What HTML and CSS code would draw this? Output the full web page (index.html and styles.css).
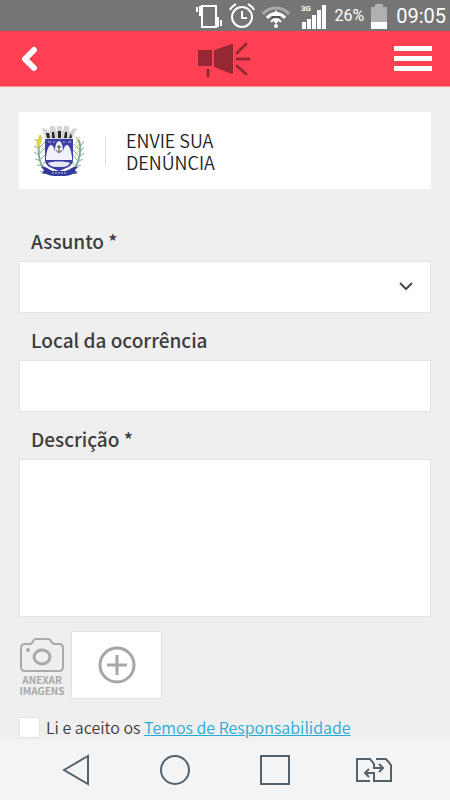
FILE: index.html
```html
<!DOCTYPE html>
<html lang="pt-BR">
<head>
    <meta charset="UTF-8">
    <meta name="viewport" content="width=device-width, initial-scale=1.0">
    <title>Envie sua denúncia</title>
    <link rel="stylesheet" href="styles.css">
</head>
<body>

    <div class="status-bar">
        <svg width="26" height="26" viewBox="0 0 26 26" fill="none" stroke="#fff" stroke-width="2">
            <rect x="6" y="3" width="14" height="21" stroke-width="2"/>
            <path d="M4 3v10M1 4v5M22 14v10M25 17v6"/>
        </svg>
        <svg width="26" height="26" viewBox="0 0 26 26" fill="none" stroke="#fff" stroke-width="2">
            <circle cx="13" cy="14" r="10"/>
            <path d="M13 8v7h5M1 7C2 4 4 3 7 1M25 7c-1-3-3-4-6-6"/>
        </svg>
        <svg width="28" height="26" viewBox="0 0 28 26" fill="none">
            <path d="M1 11C8 3 20 3 27 11" stroke="#aaa" stroke-width="3"/>
            <path d="M5 15C10 9 18 9 23 15" stroke="#fff" stroke-width="3"/>
            <path d="M9 19c3-4 7-4 10 0" stroke="#fff" stroke-width="2"/>
            <path d="M14 7l-4 6h8zM14 21l-4-5h8z" fill="#fff"/>
            <path d="M10 14h8" stroke="#333" stroke-width="1"/>
            <circle cx="14" cy="23" r="2" fill="#fff"/>
        </svg>
        <svg class="signal" width="26" height="26" viewBox="0 0 26 26" fill="#fff">
            <text class="signal-text" x="0" y="8">3G</text>
            <path d="M1 19h4v7H1zM6 16h4v10H6zM11 12h4v14h-4zM16 7h4v19h-4zM21 2h4v24h-4z"/>
        </svg>
        <span class="battery-level">26%</span>
        <svg width="16" height="26" viewBox="0 0 16 26">
            <path d="M0 4h4V1h8v3h4v16H0z" fill="#b0b0b0"/>
            <path d="M0 19h16v7H0z" fill="#fff"/>
        </svg>
        <time class="clock">09:05</time>
    </div>

    <header class="header">
        <button type="button" class="header-button back" aria-label="Voltar">
            <svg width="18" height="26" viewBox="0 0 18 26" fill="none" stroke="#fff" stroke-width="6" stroke-linecap="round" stroke-linejoin="round">
                <path d="M13 4L4 13l9 9"/>
            </svg>
        </button>
        <svg class="megaphone" width="54" height="38" viewBox="0 0 54 38" fill="#962833" stroke="#962833">
            <rect x="1" y="11" width="12" height="14" stroke-width="2"/>
            <path d="M17 11L34 5v28l-17-7z" stroke-width="2" stroke-linejoin="round"/>
            <path d="M10 30v6M39 13l9-9M39 19h12M39 26l9 8" stroke-width="3" stroke-linecap="round"/>
        </svg>
        <button type="button" class="header-button" aria-label="Menu">
            <svg width="38" height="26" viewBox="0 0 38 26" fill="#fff">
                <path d="M0 0h38v5H0zM0 10h38v5H0zM0 20h38v5H0z"/>
            </svg>
        </button>
    </header>

    <main class="content">
        <div class="title-card">
            <svg width="52" height="52" viewBox="0 0 52 52">
                <!-- ramos -->
                <g fill="none" stroke="#7faf9c" stroke-width="1">
                    <path d="M15 47C6 41 4 29 7 13M37 47c9-6 12-20 9-32" stroke-width="2"/>
                    <path d="M6 18l-4-4M6 24l-5-3M6 30l-5-3M8 36l-6-2M11 41l-7-1M14 46l-7 1M7 22l5-5M7 28l5-5M8 34l5-5M10 39l4-4"/>
                    <path d="M47 18l-4-6M47 22l4-6M47 27l4-5M46 32l5-4M44 37l6-3M41 42l7-2M38 46l7 1M46 24l-5-5M45 30l-5-5M44 35l-4-5M41 40l-3-5"/>
                </g>
                <path d="M7 9c3 3 2 6 1 9l-3 6c-3-4-1-10 2-15z" fill="#dbd447"/>
                <path d="M43 18l4-6M42 24l4-5M42 30l4-5" stroke="#d2cc62" stroke-width="1"/>
                <!-- escudo -->
                <path d="M12 14h28v21c0 6-6 8-14 11-8-3-14-5-14-11z" fill="#3b3fa6"/>
                <path d="M13 32c1-8 3-12 5-12 2 0 3 3 4 6 0-6 2-10 4-10s4 4 4 10c1-3 2-6 4-6s4 4 5 12v3H13z" fill="#f0f1fa"/>
                <path d="M15 38c4-2 18-2 22 0-2 4-6 4-11 4s-9 0-11-4z" fill="#e6e8f8"/>
                <path d="M26 20v7M24 22h4M23 25c1 3 5 3 6 0" fill="none" stroke="#444" stroke-width="1"/>
                <path d="M15 17h3M20 17h2M30 17h2M35 17h3" stroke="#b9bce8" stroke-width="1"/>
                <!-- coroa -->
                <path d="M9 3l5 1 1 3 2-1V1h5l1 5h1V1h5v5h1l1-5h5v5l2 1 1-3 5-1-5 11H13z" fill="#d5d5d7"/>
                <path d="M13 8l1 5h3l-1-5zM19 7v6h3l-1-6zM25 6v7h3V6zM32 7l-1 6h3V7zM38 8l-2 5h3z" fill="#272727"/>
                <!-- faixa -->
                <path d="M8 42c5-1 8 3 12 4h12c5-1 8-5 13-4l-3 3 2 4c-5-1-6 2-12 2H21c-6 0-7-3-12-2l2-4z" fill="#343a9c"/>
                <path d="M19 48h15" stroke="#c8cbf0" stroke-width="1" stroke-dasharray="2 1"/>
            </svg>
            <h1 class="title">ENVIE SUA<br>DENÚNCIA</h1>
        </div>

        <form class="form">
            <label class="label" for="assunto">Assunto *</label>
            <div class="select-wrap">
                <select class="field" id="assunto">
                    <option value=""></option>
                </select>
                <svg class="select-arrow" width="16" height="10" viewBox="0 0 16 10" fill="none" stroke="#4a4a4a" stroke-width="2">
                    <path d="M2 2l6 6 6-6"/>
                </svg>
            </div>

            <label class="label" for="local">Local da ocorrência</label>
            <input class="field" type="text" id="local">

            <label class="label" for="descricao">Descrição *</label>
            <textarea class="field description" id="descricao"></textarea>

            <div class="attach">
                <div class="attach-label">
                    <svg width="46" height="34" viewBox="0 0 46 34" fill="none" stroke="#aaa" stroke-width="2">
                        <path d="M6 6h5c2 0 2-1 3-3s2-2 3-2h12c2 0 2 1 3 2 1 2 2 3 4 3h4c3 0 4 2 4 4v19c0 3-2 4-4 4H6c-3 0-4-2-4-4V10c0-3 2-4 4-4z"/>
                        <ellipse cx="23" cy="19" rx="8" ry="7" stroke-width="3"/>
                        <circle cx="9" cy="12" r="2" fill="#aaa" stroke="none"/>
                    </svg>
                    <span>ANEXAR<br>IMAGENS</span>
                </div>
                <button type="button" class="attach-button" aria-label="Anexar imagens">
                    <svg width="38" height="38" viewBox="0 0 38 38" fill="none" stroke="#a6a6a6" stroke-width="3">
                        <circle cx="19" cy="19" r="17"/>
                        <path d="M19 9v20M9 19h20"/>
                    </svg>
                </button>
            </div>

            <div class="terms">
                <input class="checkbox" type="checkbox" id="aceito">
                <label for="aceito">Li e aceito os <a href="#termos">Temos de Responsabilidade</a></label>
            </div>
        </form>
    </main>

    <nav class="nav-bar">
        <button type="button" class="nav-button" aria-label="Voltar">
            <svg width="40" height="32" viewBox="0 0 40 32"><path d="M8 16l24-14v28z"/></svg>
        </button>
        <button type="button" class="nav-button" aria-label="Início">
            <svg width="40" height="32" viewBox="0 0 40 32"><circle cx="20" cy="16" r="14"/></svg>
        </button>
        <button type="button" class="nav-button" aria-label="Recentes">
            <svg width="40" height="32" viewBox="0 0 40 32"><path d="M6 2h28v28H6z"/></svg>
        </button>
        <button type="button" class="nav-button" aria-label="Alternar">
            <svg width="40" height="32" viewBox="0 0 40 32">
                <path d="M16 27H3V5h13l4 5v4h9M25 10l4 4-4 4M22 5h10l5 6v16H20v-8h-9M15 15l-4 4 4 4"/>
            </svg>
        </button>
    </nav>

</body>
</html>
```

FILE: styles.css
```css
* {
    box-sizing: border-box;
}

body {
    font-family: 'Noto Sans CJK JP', sans-serif;
    background-color: #efefef;
    color: #3c3c3c;
    display: flex;
    flex-direction: column;
    min-height: 100vh;
    margin: 0;
}

svg {
    display: block;
    flex-shrink: 0;
}

button {
    background: none;
    border: none;
    padding: 0;
    cursor: pointer;
}

.status-bar {
    background-color: #757575;
    color: #fff;
    font-family: Roboto, sans-serif;
    display: flex;
    justify-content: flex-end;
    align-items: center;
    gap: 7px;
    height: 31px;
    padding: 0 4px;
}

.signal {
    margin-left: 4px;
}

.signal-text {
    font-size: 8px;
    font-weight: bold;
}

.battery-level {
    font-size: 16px;
}

.clock {
    font-size: 20px;
    margin-left: 2px;
}

.header {
    background-color: #ff3f52;
    border-bottom: 1px solid #ff8d98;
    display: flex;
    justify-content: space-between;
    align-items: center;
    height: 56px;
    padding: 0 18px 0 21px;
}

.back {
    width: 34px;
}

.content {
    flex: 1;
    padding: 25px 19px 0;
}

.title-card {
    background-color: #fff;
    display: flex;
    align-items: center;
    gap: 20px;
    height: 77px;
    padding: 0 14px;
}

.title {
    color: #222;
    display: flex;
    align-items: center;
    gap: 20px;
    font-size: 18px;
    font-weight: 350;
    line-height: 22px;
    margin: 0;
}

.title::before {
    content: '';
    background-color: #ddd;
    width: 1px;
    height: 30px;
}

.form {
    padding-top: 38px;
}

.label {
    display: block;
    font-size: 19px;
    font-weight: 500;
    line-height: 28px;
    padding-left: 12px;
    margin-bottom: 6px;
}

.field {
    appearance: none;
    background-color: #fff;
    border: 1px solid #e2e2e2;
    border-radius: 0;
    display: block;
    font-family: inherit;
    font-size: 17px;
    width: 100%;
    height: 52px;
    margin-bottom: 13px;
    padding: 0 12px;
}

.select-wrap {
    position: relative;
}

.select-arrow {
    position: absolute;
    right: 17px;
    top: 20px;
    pointer-events: none;
}

.description {
    height: 158px;
    margin-bottom: 14px;
    padding: 12px;
    resize: none;
}

.attach {
    display: flex;
    align-items: center;
    gap: 6px;
}

.attach-label {
    color: #a8a8a8;
    display: flex;
    flex-direction: column;
    align-items: center;
    gap: 2px;
    font-size: 10px;
    font-weight: bold;
    line-height: 11px;
    padding-top: 4px;
    text-align: center;
}

.attach-button {
    background-color: #fff;
    border: 1px solid #dfe2e2;
    display: flex;
    justify-content: center;
    align-items: center;
    width: 91px;
    height: 68px;
}

.terms {
    display: flex;
    align-items: center;
    gap: 6px;
    font-size: 16px;
    font-weight: 350;
    line-height: 22px;
    padding-top: 17px;
}

.checkbox {
    appearance: none;
    background-color: #fff;
    border: 1px solid #e2e2e2;
    width: 21px;
    height: 21px;
    margin: 0;
}

.checkbox:checked {
    background-color: #27a9d8;
}

.terms a {
    color: #27a9d8;
}

.nav-bar {
    background-color: #f4f4f4;
    display: flex;
    justify-content: space-around;
    align-items: center;
    height: 60px;
    padding: 0 26px;
}

.nav-button svg {
    fill: none;
    stroke: #53616b;
    stroke-width: 2;
}
```
